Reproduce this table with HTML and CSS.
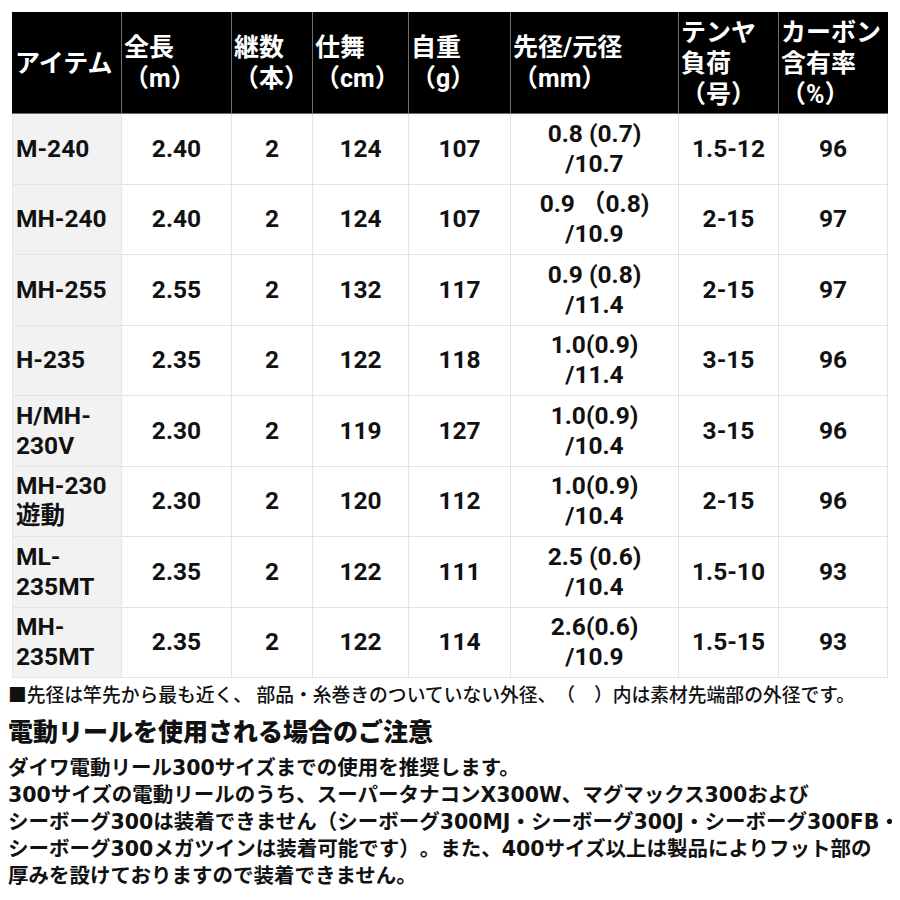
FILE: index.html
```html
<!DOCTYPE html>
<html lang="ja">
<head>
<meta charset="utf-8">
<link rel="stylesheet" href="styles.css">
</head>
<body>
<div class="wrap">
<table class="spec">
<colgroup>
<col class="c1"><col class="c2"><col class="c3"><col class="c4"><col class="c5"><col class="c6"><col class="c7"><col class="c8">
</colgroup>
<thead>
<tr>
<th>アイテム</th>
<th>全長<br>（m）</th>
<th>継数<br>（本）</th>
<th>仕舞<br>（cm）</th>
<th>自重<br>（g）</th>
<th>先径/元径<br>（mm）</th>
<th class="three">テンヤ<br>負荷<br>（号）</th>
<th class="three">カーボン<br>含有率<br>（%）</th>
</tr>
</thead>
<tbody>
<tr><td class="name">M-240</td><td>2.40</td><td>2</td><td>124</td><td>107</td><td>0.8 (0.7)<br>/10.7</td><td>1.5-12</td><td>96</td></tr>
<tr><td class="name">MH-240</td><td>2.40</td><td>2</td><td>124</td><td>107</td><td>0.9 （0.8)<br>/10.9</td><td>2-15</td><td>97</td></tr>
<tr><td class="name">MH-255</td><td>2.55</td><td>2</td><td>132</td><td>117</td><td>0.9 (0.8)<br>/11.4</td><td>2-15</td><td>97</td></tr>
<tr><td class="name">H-235</td><td>2.35</td><td>2</td><td>122</td><td>118</td><td>1.0(0.9)<br>/11.4</td><td>3-15</td><td>96</td></tr>
<tr><td class="name">H/MH-<br>230V</td><td>2.30</td><td>2</td><td>119</td><td>127</td><td>1.0(0.9)<br>/10.4</td><td>3-15</td><td>96</td></tr>
<tr><td class="name">MH-230<br>遊動</td><td>2.30</td><td>2</td><td>120</td><td>112</td><td>1.0(0.9)<br>/10.4</td><td>2-15</td><td>96</td></tr>
<tr><td class="name">ML-<br>235MT</td><td>2.35</td><td>2</td><td>122</td><td>111</td><td>2.5 (0.6)<br>/10.4</td><td>1.5-10</td><td>93</td></tr>
<tr><td class="name">MH-<br>235MT</td><td>2.35</td><td>2</td><td>122</td><td>114</td><td>2.6(0.6)<br>/10.9</td><td>1.5-15</td><td>93</td></tr>
</tbody>
</table>
</div>
<p class="note">■先径は竿先から最も近く、 部品・糸巻きのついていない外径、（　）内は素材先端部の外径です。</p>
<h2 class="caution">電動リールを使用される場合のご注意</h2>
<p class="para">ダイワ電動リール300サイズまでの使用を推奨します。<br>300サイズの電動リールのうち、スーパータナコンX300W、マグマックス300および<br>シーボーグ300は装着できません（シーボーグ300MJ・シーボーグ300J・シーボーグ300FB・<br>シーボーグ300メガツインは装着可能です）。また、400サイズ以上は製品によりフット部の<br>厚みを設けておりますので装着できません。</p>
</body>
</html>
```
FILE: styles.css
```css
html, body {
  background: #ffffff;
}
html {
  overflow: hidden;
}
body {
  margin: 8px;
  color: #111111;
  font-family: Roboto, "Noto Sans CJK JP", sans-serif;
  text-spacing-trim: space-all;
}
.wrap {
  padding: 4px 0 0 4px;
}
.spec {
  border-collapse: collapse;
  table-layout: fixed;
  width: 875px;
  font-weight: 700;
}
.c1 { width: 109px; }
.c2 { width: 110px; }
.c3 { width: 81px; }
.c4 { width: 96px; }
.c5 { width: 102px; }
.c6 { width: 168px; }
.c7 { width: 100px; }
.c8 { width: 109px; }
.spec th {
  background: #000000;
  color: #ffffff;
  font-size: 25px;
  line-height: 31px;
  height: 100px;
  padding: 0 2px;
  text-align: left;
  vertical-align: middle;
  border: 1px solid #6e6e6e;
  border-top-color: #000;
  font-weight: 700;
  white-space: nowrap;
}
.spec th:first-child { border-left-color: #000; }
.spec th:last-child { border-right-color: #000; }
.spec td {
  font-size: 24.5px;
  line-height: 30px;
  height: 69.5px;
  padding: 0 2px;
  text-align: center;
  vertical-align: middle;
  border: 1px solid #e4e4e4;
  color: #111;
  white-space: nowrap;
}
.spec td.name {
  background: #f2f2f2;
  text-align: left;
  padding-left: 3px;
}
.note {
  margin: 3px 0 0 0;
  font-family: "Noto Sans CJK JP", sans-serif;
  font-weight: 500;
  font-size: 18.8px;
  line-height: 26px;
  white-space: nowrap;
  color: #111;
}
.caution {
  margin: 5px 0 0 0;
  font-family: "Noto Sans CJK JP", sans-serif;
  font-weight: 900;
  font-size: 25px;
  line-height: 36px;
  color: #111;
}
.para {
  margin: 7px 0 0 0;
  font-family: "DejaVu Sans", "Noto Sans CJK JP", sans-serif;
  font-weight: 700;
  font-size: 20.5px;
  line-height: 27px;
  white-space: nowrap;
  color: #111;
}
```
